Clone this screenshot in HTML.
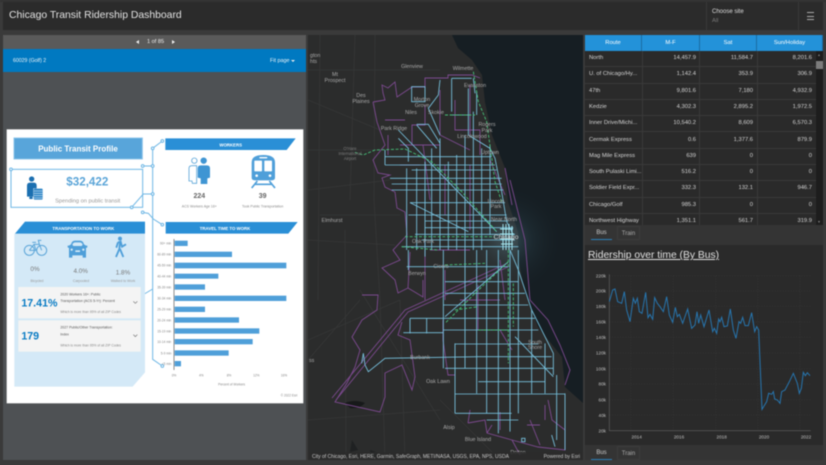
<!DOCTYPE html>
<html><head><meta charset="utf-8"><title>Chicago Transit Ridership Dashboard</title>
<style>
html,body{margin:0;padding:0}
body{width:826px;height:465px;overflow:hidden;background:#3a3a3a;font-family:"Liberation Sans",sans-serif;position:relative;color:#ddd}
#w{position:absolute;left:0;top:0;width:826px;height:465px;filter:blur(.4px)}
.a{position:absolute;white-space:nowrap}
svg{position:absolute;display:block}
svg text{font-family:"Liberation Sans",sans-serif}
.row{position:absolute;left:585px;width:231px;height:16.3px;border-bottom:1px solid #3a3a3a;box-sizing:border-box;font-size:5.8px;line-height:15px;color:#d4d4d4}
.row span{position:absolute;top:0}
.row span:nth-child(1){left:4px}
.row span:nth-child(2){right:120px}
.row span:nth-child(3){right:63px}
.row span:nth-child(4){right:4px}
.hc{position:absolute;top:35px;height:16px;background:#2392d9;color:#fff;font-size:5.8px;line-height:16px;text-align:center;box-sizing:border-box;border-right:1px solid #1a6ca3}
</style></head><body><div id="w">

<div class="a" style="left:0;top:0;width:826px;height:2px;background:#333"></div>
<div class="a" style="left:3px;top:2px;width:820px;height:28px;background:#2b2b2b"></div>
<div class="a" style="left:706px;top:2px;width:1px;height:28px;background:#383838"></div>
<div class="a" style="left:798px;top:2px;width:1px;height:28px;background:#383838"></div>
<div class="a" style="left:9px;top:8px;font-size:10.4px;line-height:16px;color:#e2e2e2">Chicago Transit Ridership Dashboard</div>
<div class="a" style="left:712px;top:8px;font-size:6px;line-height:8px;color:#ddd">Choose site</div>
<div class="a" style="left:712px;top:17px;font-size:5.8px;line-height:8px;color:#777">All</div>
<div class="a" style="left:807px;top:12px;width:7px;height:1px;background:#aaa"></div>
<div class="a" style="left:807px;top:15.5px;width:7px;height:1px;background:#aaa"></div>
<div class="a" style="left:807px;top:19px;width:7px;height:1px;background:#aaa"></div>

<!-- left panel -->
<div class="a" style="left:3px;top:35px;width:303px;height:425px;background:#4e5154"></div>
<div class="a" style="left:3px;top:35px;width:303px;height:14px;background:#5a5a5a"></div>
<div class="a" style="left:3px;top:49px;width:303px;height:23px;background:#0079c1"></div>
<div class="a" style="left:147px;top:38px;font-size:5.6px;line-height:8px;color:#eee">1 of 85</div>
<div class="a" style="left:135.5px;top:40px;width:0;height:0;border:2.5px solid transparent;border-right:3px solid #eee;border-left:0"></div>
<div class="a" style="left:172px;top:40px;width:0;height:0;border:2.5px solid transparent;border-left:3px solid #eee;border-right:0"></div>
<div class="a" style="left:13px;top:57px;font-size:5.2px;line-height:8px;color:#e8f2f8">60029 (Golf) 2</div>
<div class="a" style="left:270px;top:57px;font-size:5.4px;line-height:8px;color:#e8f2f8">Fit page</div>
<div class="a" style="left:291px;top:60px;width:0;height:0;border:2px solid transparent;border-top:2.5px solid #eee;border-bottom:0"></div>

<!-- document -->
<svg style="left:0;top:125px" width="310" height="285" viewBox="0 0 930 855">
<rect x="20" y="13" width="890" height="822" fill="#fff"/>
<rect x="42" y="39" width="385" height="63" fill="#58a5da" stroke="#8cc4ea" stroke-width="3"/>
<text x="234" y="79" font-size="24" font-weight="bold" fill="#fff" text-anchor="middle">Public Transit Profile</text>
<rect x="33" y="133" width="395" height="114" fill="none" stroke="#6fb7e5" stroke-width="3"/>
<g fill="none" stroke="#6fb7e5" stroke-width="3">
<path d="M458 70L487 48M458 70V703L487 723M428 123H458M395 247L430 207H458M428 262L445 265L460 282L487 299M428 510L458 492"/>
<g fill="#fff"><circle cx="33" cy="133" r="4"/><circle cx="395" cy="247" r="4"/><circle cx="428" cy="123" r="4"/><circle cx="458" cy="123" r="4"/><circle cx="458" cy="207" r="4"/><circle cx="458" cy="70" r="4"/><circle cx="487" cy="48" r="4"/><circle cx="428" cy="262" r="4"/><circle cx="487" cy="299" r="4"/><circle cx="428" cy="510" r="4"/><circle cx="487" cy="723" r="4"/></g>
</g>
<!-- person icon -->
<circle cx="95" cy="162" r="8" fill="#1b6fb0"/>
<path d="M81 182Q81 173 90 173H102Q110 173 110 182V190H100V215H81Z" fill="#1b6fb0"/>
<path d="M88 215H98V222H88Z" fill="#1b6fb0"/>
<rect x="101" y="191" width="27" height="33" rx="3" fill="#2f86c7"/>
<path d="M101 198H128M101 205H128M101 212H128M101 219H128" stroke="#fff" stroke-width="1.6"/>
<text x="262" y="182" font-size="35" font-weight="bold" fill="#5ba5d8" text-anchor="middle">$32,422</text>
<text x="263" y="232" font-size="17" fill="#999" text-anchor="middle">Spending on public transit</text>
<!-- ribbons -->
<path d="M496 40H887L860 75H496Z" fill="#2a8fd6"/>
<text x="692" y="65" font-size="13" font-weight="bold" fill="#fff" text-anchor="middle">WORKERS</text>
<path d="M497 291H893L865 326H497Z" fill="#2a8fd6"/>
<text x="675" y="315" font-size="13" font-weight="bold" fill="#fff" text-anchor="middle">TRAVEL TIME TO WORK</text>
<path d="M43 326H435V742L398 785H43Z" fill="#d4e9f7"/>
<path d="M75 290H435V326H45Z" fill="#2a8fd6"/>
<text x="250" y="315" font-size="13" font-weight="bold" fill="#fff" text-anchor="middle">TRANSPORTATION TO WORK</text>
<!-- workers icons -->
<circle cx="583" cy="107" r="8" fill="none" stroke="#5ba5d8" stroke-width="2.5"/>
<path d="M567 168V130Q567 122 576 122H590V175H577L576 168Z" fill="#fff" stroke="#5ba5d8" stroke-width="2.5"/>
<circle cx="611" cy="107" r="9.5" fill="#3f95d3"/>
<path d="M593 158V130Q593 121 602 121H621Q630 121 630 130V158L622 160V177H602V160Z" fill="#3f95d3"/>
<!-- train -->
<path d="M755 112Q755 90 790 90Q825 90 825 112V158Q825 166 815 166H765Q755 166 755 158Z" fill="#4f9fd9"/>
<rect x="778" y="96" width="24" height="4" rx="2" fill="#fff"/>
<rect x="763" y="107" width="23" height="32" rx="2" fill="#fff"/>
<rect x="793" y="107" width="23" height="32" rx="2" fill="#fff"/>
<circle cx="770" cy="152" r="4" fill="#fff"/><circle cx="810" cy="152" r="4" fill="#fff"/>
<path d="M772 168L755 189M808 168L825 189M764 178H816" stroke="#4f9fd9" stroke-width="5" fill="none"/>
<text x="598" y="219" font-size="21" font-weight="bold" fill="#666" text-anchor="middle">224</text>
<text x="788" y="219" font-size="21" font-weight="bold" fill="#666" text-anchor="middle">39</text>
<text x="598" y="247" font-size="10.5" fill="#888" text-anchor="middle">ACS Workers Age 16+</text>
<text x="788" y="247" font-size="10.5" fill="#888" text-anchor="middle">Took Public Transportation</text>
<!-- transport icons -->
<g fill="none" stroke="#5ba5d8" stroke-width="3">
<circle cx="88" cy="376" r="15"/><circle cx="125" cy="376" r="15"/>
<path d="M88 376L102 358H118L125 376M102 358L108 376H88M97 352H108M118 358L115 346H124"/>
</g>
<path d="M213 358Q216 347 225 347H240Q249 347 252 358L258 362H262V367L258 369V398H248V391H217V398H207V369L203 367V362H207Z" fill="#4f9fd9"/>
<path d="M217 359Q219 352 226 352H239Q246 352 248 359L245 363H220Z" fill="#d4e9f7"/>
<rect x="226" y="376" width="14" height="5" fill="#d4e9f7"/>
<circle cx="215" cy="374" r="3.5" fill="#d4e9f7"/><circle cx="250" cy="374" r="3.5" fill="#d4e9f7"/>
<circle cx="360" cy="341" r="6" fill="#4f9fd9"/>
<path d="M354 352L362 350L366 365L378 358M360 352L358 372L348 396M360 372L370 396M354 352L349 368" fill="none" stroke="#4f9fd9" stroke-width="5.5"/>
<g fill="#777" font-size="19" text-anchor="middle">
<text x="105" y="438">0%</text><text x="242" y="444">4.0%</text><text x="369" y="449">1.8%</text></g>
<g fill="#999" font-size="10.5" text-anchor="middle">
<text x="111" y="471">Bicycled</text><text x="243" y="471">Carpooled</text><text x="369" y="471">Walked to Work</text></g>
<!-- cards -->
<rect x="55" y="486" width="367" height="94" fill="#f4f4f4"/>
<rect x="55" y="586" width="367" height="94" fill="#f4f4f4"/>
<text x="64" y="544" font-size="32" font-weight="bold" fill="#0a7cc4">17.41%</text>
<text x="64" y="644" font-size="32" font-weight="bold" fill="#0a7cc4">179</text>
<g fill="#555" font-size="10.5">
<text x="181" y="511">2020 Workers 16+: Public</text>
<text x="181" y="531">Transportation (ACS 5-Yr): Percent</text>
<text x="181" y="611">2027 Public/Other Transportation:</text>
<text x="181" y="631">Index</text></g>
<g fill="#888" font-size="10">
<text x="181" y="564">Which is more than 95% of all ZIP Codes</text>
<text x="181" y="664">Which is more than 95% of all ZIP Codes</text></g>
<path d="M400 529L406 535L412 529M400 629L406 635L412 629" fill="none" stroke="#777" stroke-width="2"/>
<!-- bars -->
<g fill="#4f9fd9">
<rect x="524" y="347" width="39" height="16"/><rect x="524" y="380" width="172" height="16"/><rect x="524" y="413" width="335" height="17"/>
<rect x="524" y="446" width="131" height="15"/><rect x="524" y="478" width="91" height="16"/><rect x="524" y="512" width="335" height="16"/>
<rect x="524" y="545" width="91" height="16"/><rect x="524" y="577" width="193" height="16"/><rect x="524" y="610" width="254" height="16"/>
<rect x="524" y="642" width="234" height="16"/><rect x="524" y="676" width="162" height="16"/><rect x="524" y="708" width="19" height="16"/>
</g>
<path d="M522 342V735" stroke="#555" stroke-width="2"/>
<g fill="#888" font-size="9.5" text-anchor="end">
<text x="514" y="359">90+ min</text><text x="514" y="392">60-89 min</text><text x="514" y="425">45-59 min</text><text x="514" y="457">40-44 min</text><text x="514" y="490">35-39 min</text><text x="514" y="524">30-34 min</text><text x="514" y="557">25-29 min</text><text x="514" y="589">20-24 min</text><text x="514" y="622">15-19 min</text><text x="514" y="654">10-14 min</text><text x="514" y="688">5-9 min</text><text x="514" y="720">&lt;5 min</text></g>
<g fill="#888" font-size="9.5" text-anchor="middle">
<text x="522" y="755">0%</text><text x="604" y="755">4%</text><text x="687" y="755">8%</text><text x="769" y="755">12%</text><text x="852" y="755">16%</text>
<text x="695" y="782">Percent of Workers</text></g>
<text x="892" y="815" fill="#888" font-size="9.5" text-anchor="end">© 2022 Esri</text>
</svg>

<!-- map -->
<svg style="left:308px;top:35px" width="275" height="425" viewBox="308 35 275 425">
<defs><radialGradient id="gl" gradientUnits="userSpaceOnUse" cx="508" cy="240" r="55"><stop offset="0" stop-color="#5f8a9a" stop-opacity=".45"/><stop offset=".45" stop-color="#33505c" stop-opacity=".22"/><stop offset="1" stop-color="#1a252b" stop-opacity="0"/></radialGradient></defs>
<rect x="308" y="35" width="275" height="425" fill="#2b2c2c"/>
<path d="M452 35L458 48L472 60L482 75L485 102L492 135L505 168L508 202L518 232L518 257L525 293L538 327L562 357L565 387L583 403V35Z" fill="#161e23"/>
<rect x="450" y="170" width="133" height="140" fill="url(#gl)"/>
<!-- roads -->
<g fill="none" stroke="#363737" stroke-width=".8">
<path d="M308 100L380 130M375 35L374 200L380 300L385 460M320 35L318 300M308 190L390 180M320 215L400 215M308 240L395 245M308 340L400 300M308 360L360 300M345 230L346 460M360 290L440 420M400 300L405 460M308 420L440 410M355 35L350 200M308 150L380 150M308 70L440 70M440 400L500 460"/>
</g>
<path d="M345 403Q355 399 365 403Q360 409 350 408Z" fill="#17191a"/>
<path d="M352 440l6 10-8 2zM370 450l12 4-10 6z" fill="#1f2122"/>
<!-- purple -->
<g fill="none" stroke="#7d4a90" stroke-width=".9">
<path d="M373 102L385 100L383 93L382 85L388 88L395 82L397 97L412 87L425 87V78L448 78L448 75L472 75L480 78M373 102L377 122L385 145L373 160L378 173L390 175L382 178L385 187L395 192L397 208L405 212L407 235L395 248L393 250L400 260L382 268L395 280L398 293L408 288L410 252M408 288L423 297L423 280"/>
<path d="M362 295L378 295L377 310L362 320L352 337L360 350L355 367L347 383L335 402L380 412L385 397L385 373L402 365L412 390L415 377L410 340L398 335L402 322"/>
<path d="M332 398L405 310L508 263M336 400L408 312L510 266"/>
<path d="M400 165H420M440 90V135L470 150M455 100V130H480V155M470 85V135M425 105V125H412V145M400 145H440V165M445 165V215M470 165V230M490 160L505 195M423 145L430 200M405 120H385M388 135V155"/>
<path d="M443 320V340L448 375H455M468 423L485 420L487 433L512 440L538 447L565 450V430L552 420L548 400M468 423L470 410M487 433L492 425M500 430V412M512 440L520 455M545 420V405M530 420L540 445"/>
<path d="M510 180L515 200L525 240L530 300L548 320L560 345L570 370L565 385M505 168L512 205M500 260L505 300M478 285V330M460 300H500M430 250H470M425 240V300M445 270V300M500 330L512 350M527 425H540"/>
</g>
<!-- z7 blue -->
<g transform="translate(305 35) scale(.33333)" fill="none" stroke="#78c3e0" stroke-width="2.6">
<path d="M240 365H560M240 390H570M320 405H575M255 430H590M260 447H590M260 465H595M315 503H600M310 540H605M360 558H610M360 578H625M330 598H630M350 615H630M290 635H640"/>
<path d="M305 400V645M335 400V645M360 380V645M380 340V645M405 310V645M430 380V645M455 360V645M480 300V645M505 230V645M530 340V645M555 330V600"/>
<path d="M320 155H360V200H320ZM440 130H500M405 135L400 180L370 220L405 300M490 160V300L555 340L570 370L590 470L605 560L625 600M515 170V240M280 310L310 340V380M335 268H370L405 325M335 270L395 340M280 285L575 590M315 503L490 590M240 345V390M440 130V230M505 130L510 175M440 240H490"/>
</g>
<!-- z8 blue -->
<g transform="translate(305 250) scale(.33333)" fill="none" stroke="#78c3e0" stroke-width="2.6">
<path d="M305 50H610M420 95H640M420 130H660M415 165H670M315 205H690M295 248H415M415 240H700M450 282H700M420 355H745M520 395H720M450 432H780M450 490H620M545 510H640M175 310L180 345L190 365L240 325L520 320H740"/>
<path d="M315 205V250M365 205V250M415 0V355M450 280V490M480 0V355M515 0V430M545 0V490M580 0V550M615 0V545M640 0V490M680 180V430M720 280V430M755 375V570M780 430V600M360 0V20M310 0V60"/>
<path d="M615 0L640 60L680 180L745 310V375M420 200L610 35M630 260L745 380M175 310L170 340M650 565H660V575H650ZM740 555L750 590"/>
</g>
<!-- downtown -->
<path d="M500 229H513M500 234H514M500 239H514M501 244H513M503 224V250M506 224V250M509 224V250M512 226V250" fill="none" stroke="#a9ecf5" stroke-width=".9"/>
<!-- green -->
<g fill="none" stroke="#46c178">
<g transform="translate(305 35) scale(.33333)" stroke-width="2.7" stroke-dasharray="9 5">
<path d="M150 352L175 360L210 345L300 342L380 380L470 470L575 590M420 240H510M505 110L520 200L545 260L570 440L590 500M300 605H570M290 635L400 645"/>
</g>
<g transform="translate(305 250) scale(.33333)" stroke-width="2.7" stroke-dasharray="9 5">
<path d="M420 45L540 40M610 35L510 130L450 190L420 220M450 180L520 170M610 0V340M520 240H610M625 100V230"/>
</g>
</g>
<!-- labels -->
<g fill="#a8a8a8" font-size="5.3" text-anchor="middle">
<text x="412" y="68">Glenview</text><text x="463" y="70">Wilmette</text>
<text x="335" y="76">Mt</text><text x="335" y="82">Prospect</text>
<text x="361" y="97">Des</text><text x="361" y="103">Plaines</text>
<text x="475" y="87">Evanston</text>
<text x="422" y="101">Morton</text><text x="422" y="107">Grove</text>
<text x="411" y="114">Niles</text><text x="436" y="114">Skokie</text>
<text x="394" y="130">Park Ridge</text>
<text x="487" y="126">Rogers</text><text x="487" y="132">Park</text>
<text x="472" y="138">Lincolnwood</text><text x="490" y="154">Uptown</text>
<text x="332" y="222">Elmhurst</text><text x="423" y="243">Oak Park</text>
<text x="441" y="268">Cicero</text><text x="417" y="275">Berwyn</text>
<text x="420" y="359">Burbank</text><text x="438" y="383">Oak Lawn</text>
<text x="449" y="429">Alsip</text><text x="478" y="441">Blue Island</text>
<text x="518" y="454">Dolton</text>
<text x="496" y="203">Lincoln</text><text x="496" y="208">Park</text>
<text x="504" y="221">Near North</text>
<text x="535" y="344">South</text><text x="535" y="349">Shore</text>
</g>
<g fill="#7d7d7d" font-size="4.2" text-anchor="middle">
<text x="350" y="150">O'Hare</text><text x="350" y="155">International</text><text x="350" y="160">Airport</text></g>
<text x="506" y="239" fill="#cfcfcf" font-size="6.8" text-anchor="middle">Chicago</text>
<g fill="#a8a8a8" font-size="5.3"><text x="310" y="57">gton</text><text x="310" y="63">hts</text><text x="309" y="362">ss</text></g>
<rect x="308" y="452" width="275" height="8" fill="#2b2c2c" opacity=".85"/>
<text x="312" y="458" fill="#c8c8c8" font-size="5">City of Chicago, Esri, HERE, Garmin, SafeGraph, METI/NASA, USGS, EPA, NPS, USDA</text>
<text x="580" y="458" fill="#c8c8c8" font-size="5" text-anchor="end">Powered by Esri</text>
</svg>

<!-- table -->
<div class="a" style="left:585px;top:35px;width:238px;height:190px;background:#2a2a2a"></div>
<div class="hc" style="left:585px;width:57px">Route</div>
<div class="hc" style="left:642px;width:58px">M-F</div>
<div class="hc" style="left:700px;width:57px">Sat</div>
<div class="hc" style="left:757px;width:66px">Sun/Holiday</div>
<div class="row" style="top:51px"><span>North</span><span>14,457.9</span><span>11,584.7</span><span>8,201.6</span></div>
<div class="row" style="top:67.3px"><span>U. of Chicago/Hy...</span><span>1,142.4</span><span>353.9</span><span>306.9</span></div>
<div class="row" style="top:83.6px"><span>47th</span><span>9,801.6</span><span>7,180</span><span>4,932.9</span></div>
<div class="row" style="top:99.9px"><span>Kedzie</span><span>4,302.3</span><span>2,895.2</span><span>1,972.5</span></div>
<div class="row" style="top:116.2px"><span>Inner Drive/Michi...</span><span>10,540.2</span><span>8,609</span><span>6,570.3</span></div>
<div class="row" style="top:132.5px"><span>Cermak Express</span><span>0.6</span><span>1,377.6</span><span>879.9</span></div>
<div class="row" style="top:148.8px"><span>Mag Mile Express</span><span>639</span><span>0</span><span>0</span></div>
<div class="row" style="top:165.1px"><span>South Pulaski Limi...</span><span>516.2</span><span>0</span><span>0</span></div>
<div class="row" style="top:181.4px"><span>Soldier Field Expr...</span><span>332.3</span><span>132.1</span><span>946.7</span></div>
<div class="row" style="top:197.7px"><span>Chicago/Golf</span><span>985.3</span><span>0</span><span>0</span></div>
<div class="a" style="left:585px;top:214px;width:231px;height:11px;overflow:hidden"><div class="row" style="left:0;top:0"><span>Northwest Highway</span><span>1,351.1</span><span>561.7</span><span>319.9</span></div></div>
<div class="a" style="left:642px;top:51px;width:1px;height:174px;background:#3a3a3a"></div>
<div class="a" style="left:699px;top:51px;width:1px;height:174px;background:#3a3a3a"></div>
<div class="a" style="left:757px;top:51px;width:1px;height:174px;background:#3a3a3a"></div>
<div class="a" style="left:816px;top:51px;width:7px;height:174px;background:#1d1d1d"></div>
<div class="a" style="left:816px;top:61px;width:7px;height:8px;background:#7c7c7c"></div>
<div class="a" style="left:818px;top:54px;width:0;height:0;border:1.7px solid transparent;border-bottom:2px solid #888;border-top:0"></div>
<div class="a" style="left:818px;top:221px;width:0;height:0;border:1.7px solid transparent;border-top:2px solid #888;border-bottom:0"></div>

<!-- tabs 1 -->
<div class="a" style="left:585px;top:225px;width:238px;height:20px;background:#343434"></div>
<div class="a" style="left:591px;top:226px;width:21px;height:13px;text-align:center;font-size:6px;line-height:14px;color:#ccc;border-bottom:1px solid #2b7fb8">Bus</div>
<div class="a" style="left:617px;top:226px;width:23px;height:14px;text-align:center;font-size:6px;line-height:14px;color:#aaa;border:1px solid #3c3c3c;box-sizing:border-box">Train</div>

<!-- chart -->
<div class="a" style="left:585px;top:245px;width:238px;height:200px;background:#2a2a2a"></div>
<div class="a" style="left:588px;top:248px;font-size:10.3px;line-height:15px;color:#e0e0e0;text-decoration:underline">Ridership over time (By Bus)</div>
<svg style="left:580px;top:265px" width="246" height="180" viewBox="0 0 738 540">
<g stroke="#3c3c3c" stroke-width="1.5" stroke-dasharray="3 5" fill="none">
<path d="M88 32H692M88 78H692M88 124H692M88 171H692M88 217H692M88 264H692M88 311H692M88 357H692M88 404H692M88 450H692"/>
<path d="M152 32V497M280 32V497M407 32V497M533 32V497M660 32V497"/>
</g>
<path d="M88 28V497H692" stroke="#606060" stroke-width="2" fill="none"/>
<g fill="#c0c0c0" font-size="14" text-anchor="end">
<text x="78" y="37">220k</text><text x="78" y="83">200k</text><text x="78" y="129">180k</text><text x="78" y="176">160k</text><text x="78" y="222">140k</text><text x="78" y="269">120k</text><text x="78" y="316">100k</text><text x="78" y="362">80k</text><text x="78" y="409">60k</text><text x="78" y="456">40k</text><text x="78" y="502">20k</text></g>
<g fill="#c0c0c0" font-size="14" text-anchor="middle">
<text x="170" y="521">2014</text><text x="297" y="521">2016</text><text x="425" y="521">2018</text><text x="552" y="521">2020</text><text x="678" y="521">2022</text></g>
<polyline fill="none" stroke="#2775ae" stroke-width="3" points="88,110 98,75 105,72 113,110 125,115 133,80 140,135 150,170 160,100 166,115 172,100 178,140 186,145 197,82 204,158 210,148 218,163 224,98 232,115 240,125 250,140 260,95 268,150 278,172 286,127 292,155 298,148 308,175 323,132 335,190 345,180 351,140 356,175 362,150 372,185 387,135 398,200 403,190 410,205 416,162 420,170 425,157 432,185 442,183 451,132 460,195 468,220 477,170 482,175 488,157 495,182 505,182 515,143 524,200 530,185 536,195 546,433 560,410 566,385 575,388 580,380 584,402 592,405 600,415 605,380 615,375 628,350 640,325 646,340 652,355 658,385 664,370 670,322 676,332 682,323 690,332"/>
</svg>

<!-- tabs 2 -->
<div class="a" style="left:585px;top:445px;width:238px;height:15px;background:#343434"></div>
<div class="a" style="left:591px;top:446px;width:21px;height:13px;text-align:center;font-size:6px;line-height:14px;color:#ccc;border-bottom:1px solid #2b7fb8">Bus</div>
<div class="a" style="left:617px;top:446px;width:23px;height:14px;text-align:center;font-size:6px;line-height:14px;color:#aaa;border:1px solid #3c3c3c;box-sizing:border-box">Train</div>
</div></body></html>
